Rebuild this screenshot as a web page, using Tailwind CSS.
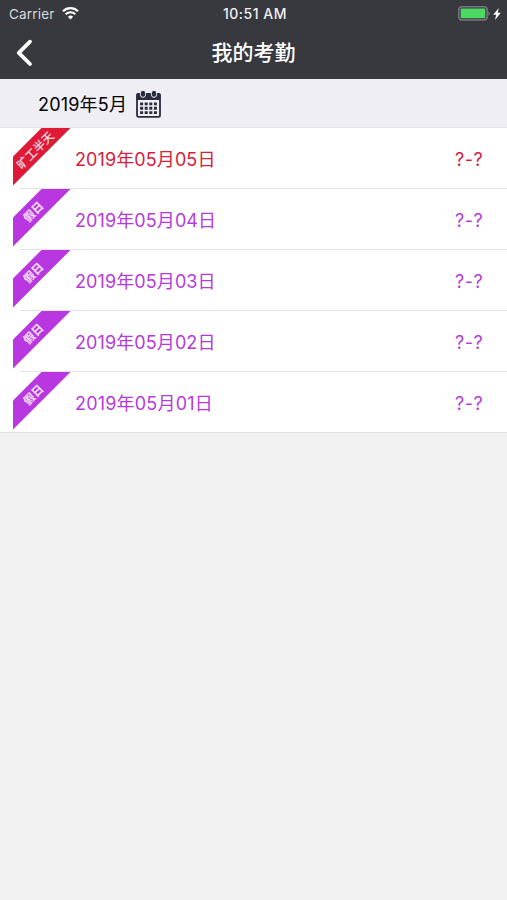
<!DOCTYPE html>
<html lang="zh-CN">
<head>
    <meta charset="UTF-8">
    <meta name="viewport" content="width=device-width, initial-scale=1.0">
    <title>我的考勤</title>

    <script src="https://cdn.jsdelivr.net/npm/@tailwindcss/browser@4"></script>

    <style>
        body {
            font-family: 'Inter', 'Noto Sans CJK SC', sans-serif;
        }
    </style>
</head>
<body class="bg-[#f2f2f2] h-screen overflow-hidden">

    <header class="bg-[#38393e] text-white h-[79px]">
        <!-- Status bar -->
        <div class="grid grid-cols-3 items-center h-[27px] pl-[9px] pr-[6px]">
            <div class="flex items-center gap-[7px]">
                <span class="pt-0.5 text-[13.5px] leading-none text-[#d8d8da] tracking-[0.2px]">Carrier</span>
                <svg class="w-[17px] h-[13px]" viewBox="0 0 17 13" fill="none" stroke="#fff" stroke-width="2.1">
                    <path d="M1 4.2a10.6 10.6 0 0 1 15 0"/>
                    <path d="M3.7 7.3a6.8 6.8 0 0 1 9.6 0"/>
                    <path d="M8.5 12.4 5.9 9.7a3.7 3.7 0 0 1 5.2 0z" fill="#fff" stroke="none"/>
                </svg>
            </div>
            <span class="pt-px text-[14px] leading-none font-medium tracking-[0.5px] text-center text-[#f0f0f1] whitespace-nowrap">10:51 AM</span>
            <div class="flex items-center justify-end gap-[3px]">
                <svg class="w-8 h-[15px]" viewBox="0 0 32 15">
                    <rect x=".8" y=".8" width="28.4" height="13.2" rx="3.2" fill="none" stroke="#77797c" stroke-width="1.5"/>
                    <rect x="2.7" y="2.6" width="24.6" height="9.6" rx="1" fill="#4cd964"/>
                    <path d="M30.4 5.2a2.6 2.6 0 0 1 0 4.6z" fill="#77797c"/>
                </svg>
                <svg class="w-2 h-3" viewBox="0 0 8 12" fill="#fff">
                    <path d="M5.8 0 .2 6.8h3L2 12l5.8-7.2H4.7z"/>
                </svg>
            </div>
        </div>
        <!-- Title bar -->
        <div class="grid grid-cols-3 items-center h-[51px] px-[15px]">
            <svg class="w-[19px] h-[28px]" viewBox="0 0 19 28" fill="none" stroke="#fff" stroke-width="3.8" stroke-linecap="round" stroke-linejoin="round">
                <path d="M15 2.7 3.8 13.8 15 25"/>
            </svg>
            <h1 class="text-[21px] leading-none font-medium text-center">我的考勤</h1>
        </div>
    </header>

    <div class="flex items-center h-[49px] pl-[38px] gap-[9px] bg-[#efeef4] border-b border-[#e4e4e7] text-black">
        <span class="pt-[3px] text-[18px] leading-none tracking-[0.2px]">2019年5月</span>
        <svg class="mt-0.5 w-[25px] h-[28px]" viewBox="0 0 25 28">
            <rect x="1" y="4" width="23" height="22.8" rx="1.6" fill="#efeef4" stroke="#2a2b3c" stroke-width="1.8"/>
            <path d="M.5 4.5A1.5 1.5 0 0 1 2 3h21a1.5 1.5 0 0 1 1.5 1.5V10H.5z" fill="#2a2b3c"/>
            <g fill="#2a2b3c" stroke="#efeef4" stroke-width="1">
                <rect x="4.4" y=".3" width="5.2" height="7" rx="2.6"/>
                <rect x="15.4" y=".3" width="5.2" height="7" rx="2.6"/>
            </g>
            <path d="M5.6 12.4v11.6M10.2 12.4v11.6M14.8 12.4v11.6M19.4 12.4v11.6" stroke="#2a2b3c" stroke-width="3" stroke-dasharray="2.9 1.5"/>
        </svg>
    </div>

    <ul class="bg-white text-[18px] leading-none text-[#b53adb]">
        <li class="relative flex items-center justify-between h-[61px] pt-0.5 pl-[75px] pr-[24px] text-[#d8203a]">
            <svg class="absolute left-[13px] top-0 w-[58px] h-[58px]" viewBox="0 0 58 58">
                <path d="M28.5 0H57.5L0 57.5V28.5z" fill="#e01a36"/>
                <text x="22" y="26.5" transform="rotate(-45 22 22)" text-anchor="middle" font-size="11.7" font-weight="500" fill="#fbdfe3">旷工半天</text>
            </svg>
            <span class="tracking-[0.1px]">2019年05月05日</span>
            <span class="tracking-[0.4px]">?-?</span>
            <i class="absolute left-5 right-0 bottom-0 h-px bg-[#e3e3e5]"></i>
        </li>
        <li class="relative flex items-center justify-between h-[61px] pt-0.5 pl-[75px] pr-[24px]">
            <svg class="absolute left-[13px] top-0 w-[58px] h-[58px]" viewBox="0 0 58 58">
                <path d="M28.5 0H57.5L0 57.5V28.5z" fill="#b937e0"/>
                <text x="20.5" y="27" transform="rotate(-45 20.5 23)" text-anchor="middle" font-size="11.5" font-weight="700" fill="#f5e0fb">假日</text>
            </svg>
            <span class="tracking-[0.1px]">2019年05月04日</span>
            <span class="tracking-[0.4px]">?-?</span>
            <i class="absolute left-5 right-0 bottom-0 h-px bg-[#e3e3e5]"></i>
        </li>
        <li class="relative flex items-center justify-between h-[61px] pt-0.5 pl-[75px] pr-[24px]">
            <svg class="absolute left-[13px] top-0 w-[58px] h-[58px]" viewBox="0 0 58 58">
                <path d="M28.5 0H57.5L0 57.5V28.5z" fill="#b937e0"/>
                <text x="20.5" y="27" transform="rotate(-45 20.5 23)" text-anchor="middle" font-size="11.5" font-weight="700" fill="#f5e0fb">假日</text>
            </svg>
            <span class="tracking-[0.1px]">2019年05月03日</span>
            <span class="tracking-[0.4px]">?-?</span>
            <i class="absolute left-5 right-0 bottom-0 h-px bg-[#e3e3e5]"></i>
        </li>
        <li class="relative flex items-center justify-between h-[61px] pt-0.5 pl-[75px] pr-[24px]">
            <svg class="absolute left-[13px] top-0 w-[58px] h-[58px]" viewBox="0 0 58 58">
                <path d="M28.5 0H57.5L0 57.5V28.5z" fill="#b937e0"/>
                <text x="20.5" y="27" transform="rotate(-45 20.5 23)" text-anchor="middle" font-size="11.5" font-weight="700" fill="#f5e0fb">假日</text>
            </svg>
            <span class="tracking-[0.1px]">2019年05月02日</span>
            <span class="tracking-[0.4px]">?-?</span>
            <i class="absolute left-5 right-0 bottom-0 h-px bg-[#e3e3e5]"></i>
        </li>
        <li class="relative flex items-center justify-between h-[61px] pt-0.5 pl-[75px] pr-[24px]">
            <svg class="absolute left-[13px] top-0 w-[58px] h-[58px]" viewBox="0 0 58 58">
                <path d="M28.5 0H57.5L0 57.5V28.5z" fill="#b937e0"/>
                <text x="20.5" y="27" transform="rotate(-45 20.5 23)" text-anchor="middle" font-size="11.5" font-weight="700" fill="#f5e0fb">假日</text>
            </svg>
            <span class="tracking-[0.2px]">2019年05月01日</span>
            <span class="tracking-[0.4px]">?-?</span>
            <i class="absolute left-0 right-0 bottom-0 h-px bg-[#e3e3e5]"></i>
        </li>
    </ul>

</body>
</html>
